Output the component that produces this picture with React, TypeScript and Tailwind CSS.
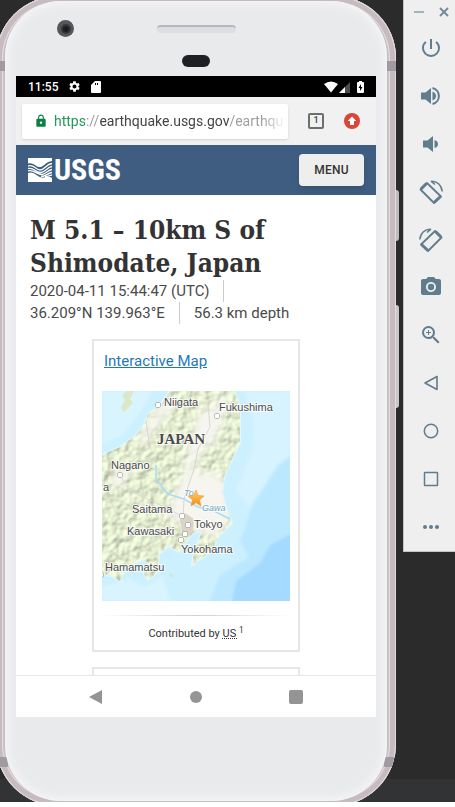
import type { ReactNode } from 'react';
import { MdCameraAlt, MdLock, MdPowerSettingsNew, MdSettings, MdZoomIn } from 'react-icons/md';

const cities = [
  { name: 'Niigata', dot: [56, 14], at: [62, 15] },
  { name: 'Fukushima', dot: [115, 25], at: [117, 20] },
  { name: 'Nagano', dot: [18, 84], at: [9, 78] },
  { name: 'Saitama', dot: [80, 125], at: [30, 122] },
  { name: 'Tokyo', dot: [86, 134], at: [92, 137] },
  { name: 'Kawasaki', dot: [83, 143], at: [25, 144] },
  { name: 'Yokohama', dot: [79, 149], at: [79, 162] },
  { name: 'Hamamatsu', dot: [-1, 184], at: [3, 180] },
];

const land =
  'M68 0L58 14L46 23L42 34L33 45L18 56L0 64V183L10 185L18 190L22 181L30 173L40 169L47 172L42 183L46 189L56 181L57 163L66 155L78 161L84 151L91 142L100 140L96 151L92 160L90 174L97 169L111 159L116 146L130 132L124 117L120 101L122 86L131 66L138 51L138 21L133 0Z';

function QuakeMap() {
  return (
    <svg viewBox="0 0 188 210" className="block h-auto w-full" role="img" aria-label="Map of central Japan">
      <defs>
        <filter id="relief" x="0" y="0" width="100%" height="100%" colorInterpolationFilters="sRGB">
          <feTurbulence type="fractalNoise" baseFrequency="0.12" numOctaves="2" seed="8" />
          <feDiffuseLighting lightingColor="#e0ebca" surfaceScale="1.6" diffuseConstant="1.13">
            <feDistantLight azimuth="225" elevation="62" />
          </feDiffuseLighting>
        </filter>
        <filter id="soft" x="-20%" y="-20%" width="140%" height="140%">
          <feGaussianBlur stdDeviation="4" />
        </filter>
        <filter id="sea" x="-10%" y="-10%" width="120%" height="120%">
          <feGaussianBlur stdDeviation="1.5" />
        </filter>
        <clipPath id="land">
          <path d={land} />
        </clipPath>
        <linearGradient id="star" x1="0" y1="0" x2="0" y2="1">
          <stop offset="0" stopColor="#ffd45c" />
          <stop offset="1" stopColor="#f58a1f" />
        </linearGradient>
      </defs>
      <rect width="188" height="210" fill="#cdf0ff" />
      <g filter="url(#sea)">
        <path d="M0 0H50L38 22L20 44L0 54Z" fill="#d8f4ff" />
        <path d="M142 0L152 30L150 60L134 100L150 120L188 96V0Z" fill="#d6f3ff" />
        <path d="M198 58L176 74L160 99L150 114L138 150L146 166L118 184L103 220H198Z" fill="#bce8ff" />
        <path d="M198 138L168 154L158 172L134 190L128 220H198Z" fill="#a4daff" />
        <path d="M0 196L28 188L42 197L60 185L68 210H0Z" fill="#daf4ff" />
      </g>
      <path d="M32 0L28 8L31 12L22 21L19 17L23 9L20 4L25 0ZM68 182L71 184L70 187L67 185Z" fill="#dce8c5" />
      <path d={land} fill="#f5f4ed" stroke="#e2f7ff" strokeWidth="2" />
      <g clipPath="url(#land)">
        <g opacity="0.85">
          <rect width="188" height="210" filter="url(#relief)" />
        </g>
        <g fill="#f7f5f0" filter="url(#soft)">
          <path d="M76 92L98 80L123 86L128 130L112 146L88 137L66 125Z" />
          <path d="M95 26L107 14L112 34L96 68L88 92L80 88Z" />
          <path d="M120 0L126 14L114 44L108 62L104 40L112 16Z" />
          <path d="M66 2L74 12L56 35L40 54L36 48Z" />
          <path d="M10 86L20 72L26 86L14 100Z" />
        </g>
        <path d="M78 129L83 122L92 128L91 142L81 146Z" fill="#d9d5c6" />
        <path d="M106 12L108 36L96 58L92 78L82 108L81 128M18 84L28 100L50 110L80 125M44 30L48 56L20 78M4 100L14 122" fill="none" stroke="#d9d7d0" />
      </g>
      <path d="M54 74L54 88L66 103L82 108L96 116L110 119L128 128" fill="none" stroke="#a9ddf5" strokeWidth="1.5" />
      <g fontFamily="'Liberation Sans', Arial, sans-serif" fontSize="11" fill="#4b4b4b" stroke="#fff" strokeOpacity="0.75" strokeWidth="2" paintOrder="stroke">
        {cities.map((c) => (
          <g key={c.name}>
            <circle cx={c.dot[0]} cy={c.dot[1]} r="2.5" fill="#fff" stroke="#777" strokeOpacity="1" strokeWidth="1" />
            <text x={c.at[0]} y={c.at[1]}>{c.name}</text>
          </g>
        ))}
        <text x="1" y="100">a</text>
        <text x="55" y="53" fontFamily="'Liberation Serif', serif" fontSize="15" fontWeight="700">JAPAN</text>
        <text x="100" y="120" fontSize="9" fontStyle="italic" fill="#6ba6c4">Gawa</text>
        <text x="82" y="105" fontSize="9" fontStyle="italic" fill="#6ba6c4">To</text>
      </g>
      <path d="M94 99L96.200 104.500L102 105L97.500 109L99 115L94 111.700L89 115L90.500 109L86 105L91.800 104.500Z" fill="url(#star)" stroke="#e99a3a" strokeWidth="0.6" />
    </svg>
  );
}

function RotateIcon({ flip = false }: { flip?: boolean }) {
  return (
    <svg viewBox="0 0 24 24" className={flip ? 'size-6 -scale-x-100' : 'size-6'} fill="none" stroke="currentColor" aria-hidden="true">
      <path d="M1.500 9.500L8 3L22 16.500L15 23Z" strokeWidth="1.800" strokeLinejoin="round" />
      <path d="M2 9L7.500 3.500M15 22.500L21.500 16.500" strokeWidth="3" />
      <path d="M12 1.200C18 0.800 22.500 5 23.200 11.500M12 1.200L16 4.500" strokeWidth="1.500" />
    </svg>
  );
}

const tools: { label: string; icon: ReactNode }[] = [
  { label: 'Power', icon: <MdPowerSettingsNew size={24} /> },
  {
    label: 'Volume up',
    icon: (
      <svg viewBox="0 0 24 24" className="size-6" fill="currentColor" aria-hidden="true">
        <path d="M2 8.500H6.500L12 4V20L6.500 15.500H2ZM13.500 7.500Q17 9 17 12T13.500 16.500Z" />
        <path d="M13.500 4A8.200 8.200 0 0 1 13.500 20" fill="none" stroke="currentColor" strokeWidth="2" />
      </svg>
    ),
  },
  {
    label: 'Volume down',
    icon: (
      <svg viewBox="0 0 24 24" className="size-6" fill="currentColor" aria-hidden="true">
        <path d="M4 8.500H8.500L14 4V20L8.500 15.500H4ZM15.500 8Q19 9 19 12T15.500 16Z" />
      </svg>
    ),
  },
  { label: 'Rotate left', icon: <RotateIcon /> },
  { label: 'Rotate right', icon: <RotateIcon flip /> },
  { label: 'Take screenshot', icon: <MdCameraAlt size={24} /> },
  { label: 'Zoom', icon: <MdZoomIn size={24} /> },
  { label: 'Back', icon: <svg viewBox="0 0 24 24" className="size-6" fill="none" stroke="currentColor" strokeWidth="1.600" strokeLinejoin="round" aria-hidden="true"><path d="M6 12L18 5.500V18.500Z" /></svg> },
  { label: 'Home', icon: <svg viewBox="0 0 24 24" className="size-6" fill="none" stroke="currentColor" strokeWidth="1.500" aria-hidden="true"><circle cx="12" cy="12" r="6.700" /></svg> },
  { label: 'Overview', icon: <svg viewBox="0 0 24 24" className="size-6" fill="none" stroke="currentColor" strokeWidth="1.500" aria-hidden="true"><rect x="5.500" y="5.500" width="13" height="13" rx="0.500" /></svg> },
  { label: 'More', icon: <svg viewBox="0 0 24 24" className="size-6" fill="currentColor" aria-hidden="true"><circle cx="6" cy="12" r="2" /><circle cx="12" cy="12" r="2" /><circle cx="18" cy="12" r="2" /></svg> },
];

function Toolbar() {
  return (
    <aside className="flex w-[52px] shrink-0 flex-col self-start border-b border-l border-[#c4c4c4] bg-[#efefef] text-[#5f7d8c]">
      <div className="flex h-6 items-center justify-between pl-2.5 pr-1.5 text-[#8fa4af]">
        <button aria-label="Minimize" className="flex">
          <svg viewBox="0 0 10 10" className="size-2.5" stroke="currentColor" strokeWidth="1.600"><path d="M0 5H10" /></svg>
        </button>
        <button aria-label="Close" className="flex">
          <svg viewBox="0 0 10 10" className="size-2.5" stroke="#71899a" strokeWidth="1.800"><path d="M1 1L9 9M9 1L1 9" /></svg>
        </button>
      </div>
      <div className="flex h-[527px] flex-col">
        {tools.map((t) => (
          <button key={t.label} aria-label={t.label} className="flex flex-1 items-center justify-center pl-0.5">
            {t.icon}
          </button>
        ))}
      </div>
    </aside>
  );
}

function StatusBar() {
  return (
    <div className="flex h-[21px] items-center justify-between bg-black px-3 text-white">
      <div className="flex items-center gap-2.5">
        <span className="text-xs font-medium">11:55</span>
        <MdSettings size={13} />
        <svg viewBox="0 0 10 12" className="h-3 w-2.5" fill="currentColor"><path d="M4 0H9Q10 0 10 1V11Q10 12 9 12H1Q0 12 0 11V4ZM4 2V4H5V2ZM6 2V4H7V2Z" fillRule="evenodd" /></svg>
      </div>
      <svg viewBox="0 0 40 12" className="h-3 w-10" fill="currentColor">
        <path d="M0 3Q7 -2 14 3L7 11.500Z" />
        <path d="M26 1V12H15Z" opacity="0.3" />
        <path d="M21 6V12H15Z" />
        <path d="M34 1H35V0H38V1H39Q40 1 40 2V11Q40 12 39 12H34Q33 12 33 11V2Q33 1 34 1ZM37 3L34.500 7H36V10L38.500 6H37Z" fillRule="evenodd" />
      </svg>
    </div>
  );
}

function AddressBar() {
  return (
    <div className="flex h-12 items-center bg-[#f1f1f1] pl-1.5 pr-4">
      <div className="flex h-[35px] min-w-0 flex-1 items-center gap-1.5 rounded-xs bg-white pl-3 pr-0.5 shadow-sm">
        <MdLock size={14} className="shrink-0 text-[#0b8043]" />
        <a href="#top" className="min-w-0 flex-1 whitespace-nowrap text-sm text-[#a0a0a0] [mask-image:linear-gradient(to_right,#000_90%,transparent)]">
          <span className="text-[#239a58]">https</span>://<span className="text-[#444]">earthquake.usgs.gov</span>/earthqu
        </a>
      </div>
      <button aria-label="Tabs" className="ml-5 flex size-4 items-center justify-center rounded-xs border-2 border-[#6b6f70] text-[9px] font-bold text-[#555]">1</button>
      <button aria-label="Update available" className="ml-5">
        <svg viewBox="0 0 16 16" className="size-4"><circle cx="8" cy="8" r="8" fill="#db4437" /><path d="M8 3.500L12.300 8H10V12H6V8H3.700Z" fill="#fff" /></svg>
      </button>
    </div>
  );
}

function UsgsLogo() {
  return (
    <a href="#top" className="flex items-center gap-0.5 text-white">
      <svg viewBox="0 0 24 24" className="size-6" fill="none" stroke="currentColor" strokeWidth="1.300" aria-hidden="true">
        <path d="M0 0H24V3C17 4 15 10 11 9C7 8 5 4 0 5.500Z" fill="currentColor" stroke="none" />
        <path d="M0 24V15C5 13 8 17 12 19C16 21 19 17 24 20V24Z" fill="currentColor" stroke="none" />
        <path d="M0 8C6 6 8 12 12 12C17 12 18 6 24 5.500M0 10.500C6 9 8 15 13 14.500C18 14 19 9 24 8.500M0 13C6 11 9 17 14 16.500C18 16 20 12 24 11.500M13 18.500C18 18.500 20 15 24 14.500M17 19C20 18.500 21 17.500 24 17" />
      </svg>
      <span className="font-['Liberation_Sans_Narrow','Roboto_Condensed','Open_Sans_Condensed',Roboto,sans-serif] text-[30px] font-bold leading-none">USGS</span>
    </a>
  );
}

function Phone() {
  return (
    <main className="relative -mb-1 -ml-1 -mt-1 mr-[7px] flex min-w-0 flex-1 flex-col rounded-[62px] bg-[#c9c0c4] px-[9px] py-[5px] shadow-[inset_0_0_0_1px_#e2dcdf,inset_0_0_0_6px_#c6bcc0,inset_0_0_0_7px_#e5dfe2]">
      <div className="absolute inset-0 overflow-hidden rounded-[62px]">
        <span className="absolute left-0 right-0 top-[65px] h-2.5 border-x-[9px] border-[#a19aa0]" />
        <span className="absolute bottom-[39px] left-0 right-0 h-2.5 border-x-[12px] border-[#a19aa0]" />
      </div>
      <span className="absolute -right-[3px] top-[194px] h-[51px] w-[3px] rounded-r-sm bg-[#bcbcbc]" />
      <span className="absolute -right-[3px] top-[309px] h-[103px] w-[3px] rounded-r-sm bg-[#c8c8c8]" />
      <div className="relative flex flex-col rounded-[56px] bg-[#e9eaec] px-[11px] shadow-[inset_0_0_8px_3px_#f6f6f8]">
        <div className="grid h-[75px] grid-cols-[1fr_79px_1fr] pt-[19px]">
          <div className="flex pl-[41px]">
            <span className="flex size-[17px] items-center justify-center rounded-full bg-[#55565a]">
              <span className="size-2.5 rounded-full border-2 border-[#35363a] bg-[#1c1d1f]" />
            </span>
          </div>
          <div className="flex flex-col items-center gap-[22px] pt-[5px]">
            <span className="h-2 w-full rounded-sm border-t-2 border-[#b4b6c0] bg-[#dddee2]" />
            <span className="h-3 w-7 rounded-full bg-[#1f2024]" />
          </div>
        </div>
        <div className="flex flex-col bg-white">
          <StatusBar />
          <AddressBar />
          <header className="flex h-[50px] items-center justify-between bg-[#3e5d80] px-3">
            <UsgsLogo />
            <button className="h-8 rounded-sm bg-[#eee] px-[15px] text-xs font-medium tracking-wide text-[#333] shadow-md">MENU</button>
          </header>
          <article className="flex flex-col px-3.5 pt-[19px] text-[#4a4a4a]">
            <h1 className="font-['DejaVu_Serif_Condensed','DejaVu_Serif',serif] text-[26px] font-bold leading-[33px] text-[#333]">
              M 5.1 – 10km S of Shimodate, Japan
            </h1>
            <ul className="flex flex-wrap text-[15px] leading-[22px]">
              <li className="mr-3.5 border-r border-[#ccc] pr-3.5">2020-04-11 15:44:47 (UTC)</li>
              <li className="mr-3.5 border-r border-[#ccc] pr-3.5">36.209°N 139.963°E</li>
              <li>56.3 km depth</li>
            </ul>
            <section className="mt-[15px] flex w-[208px] flex-col self-center border-2 border-[#e6e6e6] px-2 pb-1.5">
              <a href="#map" className="mt-2 self-start pl-0.5 text-[15px] leading-6 text-[#1f78b8] underline">Interactive Map</a>
              <div className="mt-[18px]"><QuakeMap /></div>
              <hr className="mt-3.5 h-px border-0 bg-linear-to-r from-transparent via-[#d0d0d0] to-transparent" />
              <p className="mt-2 text-center text-[11px] leading-5 text-[#333]">
                Contributed by <abbr title="USGS National Earthquake Information Center" className="underline decoration-dotted">US&nbsp;</abbr><sup>1</sup>
              </p>
            </section>
            <section className="mt-[15px] h-2 w-[208px] self-center border-2 border-b-0 border-[#e6e6e6]" />
          </article>
          <nav className="grid h-[42px] grid-cols-[1fr_40px_60px_40px_60px_40px_1fr] items-center border-t border-[#e8e8e8] text-[#949494]">
            <button aria-label="Back" className="col-start-2 flex justify-center"><svg viewBox="0 0 14 14" className="size-3.5" fill="currentColor"><path d="M0 7L13 0V14Z" /></svg></button>
            <button aria-label="Home" className="col-start-4 flex justify-center"><span className="size-3 rounded-full bg-[#949494]" /></button>
            <button aria-label="Overview" className="col-start-6 flex justify-center"><span className="size-3.5 rounded-xs bg-[#949494]" /></button>
          </nav>
        </div>
        <div className="h-[84px]" />
      </div>
    </main>
  );
}

export default function App() {
  return (
    <div id="top" className="flex items-start overflow-hidden bg-[linear-gradient(#2b2b2b_779px,#313335_779px)] font-[Roboto,'Liberation_Sans',sans-serif]">
      <Phone />
      <Toolbar />
    </div>
  );
}
